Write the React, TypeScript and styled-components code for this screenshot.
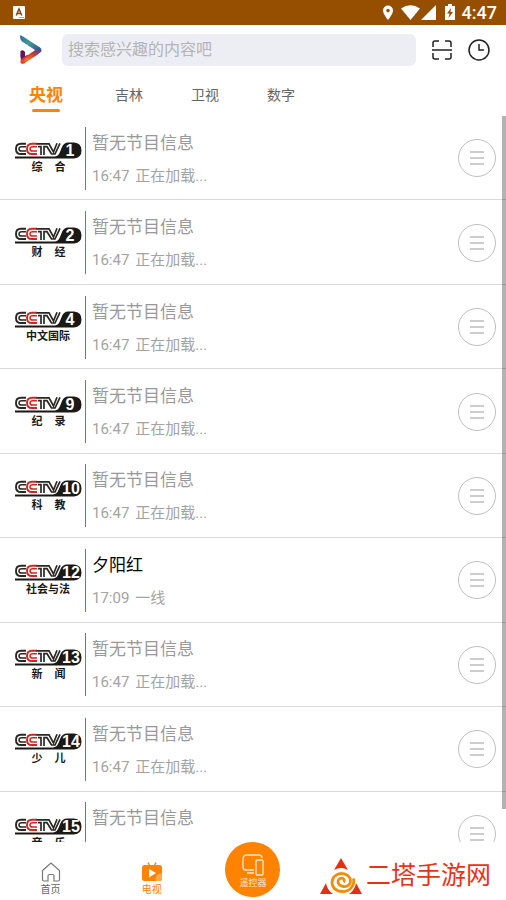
import React from "react";
import styled, { createGlobalStyle } from "styled-components";

const GlobalStyle = createGlobalStyle`
  * { box-sizing: border-box; }
  body {
    margin: 0;
    background: #fff;
    font-family: Roboto, "Noto Sans CJK SC", sans-serif;
  }
  button, input { font: inherit; }
  button { border: 0; padding: 0; background: none; cursor: pointer; }
`;

const Page = styled.div`
  display: flex;
  flex-direction: column;
  height: 100vh;
  overflow: hidden;
`;

const StatusBar = styled.div`
  flex: none;
  display: flex;
  align-items: center;
  height: 25px;
  padding: 0 9px 0 13px;
  background: #964f00;
  color: #fff;
`;

const StatusIcons = styled.div`
  display: flex;
  align-items: center;
  margin-left: auto;
`;

const Clock = styled.time`
  margin-left: 7px;
  font-size: 18px;
  font-weight: 500;
  line-height: 25px;
`;

const Header = styled.header`
  flex: none;
  display: flex;
  align-items: center;
  height: 49px;
  padding: 0 16px 0 18px;
`;

const SearchInput = styled.input`
  flex: 1;
  min-width: 0;
  height: 32px;
  margin: 0 15px 0 18px;
  padding: 0 6px;
  border: 0;
  border-radius: 6px;
  background: #edeef3;
  font-size: 16px;
  outline: none;
  &::placeholder { color: #b4b4b6; opacity: 1; }
`;

const HeaderButton = styled.button`
  display: flex;
  width: 22px;
  height: 22px;
  & + & { margin-left: 15px; }
`;

const Tabs = styled.nav`
  flex: none;
  display: flex;
  align-items: center;
  height: 42px;
  padding-left: 8px;
`;

const Tab = styled.button<{ $active?: boolean }>`
  display: flex;
  flex-direction: column;
  align-items: center;
  width: 76px;
  height: 42px;
  font-size: ${(p) => (p.$active ? 17 : 14)}px;
  font-weight: ${(p) => (p.$active ? 700 : 400)};
  line-height: 42px;
  color: ${(p) => (p.$active ? "#ff8200" : "#666")};
  margin-right: ${(p) => (p.$active ? 7 : 0)}px;
  &::after {
    content: "";
    flex: none;
    width: 28px;
    height: 3px;
    margin-top: -7px;
    border-radius: 2px;
    background: ${(p) => (p.$active ? "#ff8200" : "transparent")};
  }
`;

const ListArea = styled.main`
  flex: 1;
  min-height: 0;
  display: flex;
  align-items: flex-start;
  position: relative;
  overflow: hidden;
`;

const ScrollThumb = styled.div`
  position: absolute;
  top: 0;
  right: 0;
  bottom: 33px;
  width: 4px;
  background: rgba(0, 0, 0, 0.3);
`;

const ChannelList = styled.ul`
  flex: 1;
  display: grid;
  grid-auto-rows: 1fr;
  min-height: 760px;
  margin: 0;
  padding: 0;
  list-style: none;
`;

const Row = styled.li`
  display: flex;
  align-items: center;
  padding: 1px 10px 0 14px;
  border-bottom: 1px solid #d9d9d9;
`;

const Logo = styled.svg`
  flex: none;
  width: 68px;
  height: 34px;
  margin-right: 3px;
`;

const Program = styled.div`
  flex: 1;
  min-width: 0;
  height: 63px;
  padding-left: 6px;
  border-left: 1px solid #d65252;
`;

const Title = styled.div<{ $live?: boolean }>`
  font-size: 17px;
  line-height: 33px;
  color: ${(p) => (p.$live ? "#000" : "#999")};
`;

const Detail = styled.div`
  display: flex;
  gap: 6px;
  font-size: 15px;
  line-height: 33px;
  color: #a3a3a3;
`;

const MenuButton = styled.button`
  flex: none;
  display: flex;
  align-items: center;
  justify-content: center;
  width: 38px;
  height: 38px;
  border: 1px solid #c0c0c0;
  border-radius: 50%;
`;

const BottomBar = styled.nav`
  flex: none;
  display: grid;
  grid-template-columns: repeat(5, 1fr);
  height: 58px;
  background: #fff;
`;

const NavItem = styled.button<{ $active?: boolean }>`
  display: flex;
  flex-direction: column;
  align-items: center;
  justify-content: flex-start;
  padding-top: 20px;
  font-size: 10px;
  line-height: 15px;
  color: ${(p) => (p.$active ? "#ff8200" : "#666")};
`;

const Remote = styled.button`
  justify-self: center;
  display: flex;
  flex-direction: column;
  align-items: center;
  width: 55px;
  height: 55px;
  padding-top: 12px;
  border-radius: 50%;
  background: #ff8200;
  color: #ffe9d0;
  font-size: 9px;
  line-height: 14px;
`;

const Brand = styled.a`
  grid-column: span 2;
  justify-self: end;
  display: flex;
  align-items: center;
  gap: 4px;
  margin-right: 15px;
  padding-top: 9px;
  color: #e83317;
  font-size: 25px;
  line-height: 36px;
  text-decoration: none;
  white-space: nowrap;
`;

type Channel = { no: string; name: string; title?: string; time?: string; detail?: string };

const channels: Channel[] = [
  { no: "1", name: "综合" },
  { no: "2", name: "财经" },
  { no: "4", name: "中文国际" },
  { no: "9", name: "纪录" },
  { no: "10", name: "科教" },
  { no: "12", name: "社会与法", title: "夕阳红", time: "17:09", detail: "一线" },
  { no: "13", name: "新闻" },
  { no: "14", name: "少儿" },
  { no: "15", name: "音乐" },
];

const Caption = styled.text`
  fill: #1b1916;
  font-family: "Noto Sans CJK SC", sans-serif;
  font-size: 11px;
  font-weight: 700;
  text-anchor: middle;
`;

const ChannelNumber = styled.text`
  fill: #fff;
  font-family: "Liberation Sans", sans-serif;
  font-size: 16px;
  font-weight: 700;
  text-anchor: middle;
`;

function LetterC() {
  return (
    <>
      <path d="M12 2.800H7Q2 2.800 2 7.900T7 13H12" strokeWidth="1.900" />
      <path d="M12 5.700H7.800Q5 5.700 5 7.900T7.800 10.100H12" strokeWidth="1.500" />
    </>
  );
}

function ChannelLogo({ no, name }: Channel) {
  const wide = no.length > 1;
  return (
    <Logo viewBox="0 0 68 34" role="img" aria-label={`CCTV-${no} ${name}`}>
      <g fill="none" stroke="#2b2824">
        <LetterC />
      </g>
      <g fill="none" stroke="#cf2622" transform="translate(11 0)">
        <LetterC />
      </g>
      <path
        d="M22.500 2.800H35L39.500 11L43 2.300M24 5.700H27V14M30 14V5.700H33L37.500 13H41L46 2.300"
        fill="none"
        stroke="#2b2824"
        strokeWidth="1.700"
      />
      <path
        d={wide
          ? "M1 15.500H39Q43 15 44.500 11L46.500 6Q48.500 1.500 53 1.500H60Q67.500 2 67.500 9.500T60 17.500H1Z"
          : "M1 15.500H41Q44.500 15 46 11L48 6Q50 1.500 54 1.500H60Q67.500 2 67.500 9.500T60 17.500H1Z"}
        fill="#1b1916"
      />
      <ChannelNumber x={wide ? 57 : 56} y="15">{no}</ChannelNumber>
      {name.length === 2 ? (
        <>
          <Caption x="23" y="30">{name[0]}</Caption>
          <Caption x="46" y="30">{name[1]}</Caption>
        </>
      ) : (
        <Caption x="34" y="30">{name}</Caption>
      )}
    </Logo>
  );
}

function AppLogo() {
  return (
    <svg width="26" height="30" viewBox="0 0 26 30" aria-hidden="true">
      <defs>
        <linearGradient id="top" x1="0" y1="0" x2="1" y2="1">
          <stop offset="0" stopColor="#2c6f9b" />
          <stop offset="0.45" stopColor="#419a91" />
          <stop offset="1" stopColor="#2c3f9b" />
        </linearGradient>
        <linearGradient id="bottom" x1="0" y1="1" x2="1" y2="0">
          <stop offset="0" stopColor="#d81e2c" />
          <stop offset="0.3" stopColor="#f4801f" />
          <stop offset="0.65" stopColor="#c63b35" />
          <stop offset="1" stopColor="#2d4fa8" />
        </linearGradient>
      </defs>
      <path d="M2 .5Q3 0 5 1.500L22 12.500Q25 15 22 17.500L17 15L4 6.500Q2 5 2 .5Z" fill="url(#top)" />
      <path d="M2.500 25L18 14.500L23.500 16Q22 18 19 20L6 28.500Q2 30 2.500 25Z" fill="url(#bottom)" />
      <path d="M2.500 16Q5 14 7 17V21L9 20.500L3 25Q2 21 2.500 16Z" fill="#5b1764" />
      <path d="M3.500 24L9 20L12 20L5 25.500Z" fill="#e02c49" />
    </svg>
  );
}

function BrandMark() {
  return (
    <svg width="42" height="36" viewBox="0 0 42 36" aria-hidden="true">
      <g fill="#e62e12">
        <path d="M21 0L28 12Q21 8 14 12Z" />
        <path d="M6 25Q7 32 13 36H0Z" />
        <path d="M36 25L42 36H29Q35 32 36 25Z" />
      </g>
      <path
        d="M33.500 20.500C35 28 29.500 33.500 22.500 33.500C16 33.500 12 29.500 12 24.500C12 19 16.500 15.500 21.500 15.500C27 15.500 30.500 19 30.500 23C30.500 27 27 29 23.500 28.500C19.500 28 17.500 25.500 18 23C18.500 20.500 21 19.500 23 20.500C24.500 21.500 24.500 23 23.500 24"
        fill="none"
        stroke="#f28c0a"
        strokeWidth="2.800"
      />
    </svg>
  );
}

export default function App() {
  return (
    <Page>
      <GlobalStyle />
      <StatusBar>
        <svg width="12" height="13" viewBox="0 0 12 13" aria-hidden="true">
          <rect width="12" height="13" rx="1" fill="#fff" />
          <path d="M3.200 9.500L6 3L8.800 9.500M4.200 7.500H7.800" fill="none" stroke="#7d4a18" strokeWidth="1.500" />
          <path d="M6.500 11.500H11" stroke="#7d4a18" strokeDasharray="1 1" />
        </svg>
        <StatusIcons>
          <svg width="74" height="17" viewBox="0 0 74 17" fill="#fff" aria-hidden="true">
            <path fillRule="evenodd" d="M7 1.500A5 5 0 0 0 2 6.500C2 10 7 16 7 16S12 10 12 6.500A5 5 0 0 0 7 1.500M7 4.800A1.800 1.800 0 1 1 7 8.400A1.800 1.800 0 1 1 7 4.800" />
            <path d="M20 4.500Q29.500-2 39 4.500L29.500 16Z" />
            <path d="M55 1V16H40Z" />
            <path fillRule="evenodd" d="M64 2H67V0H71V2H74V16H64ZM70 4L66 9.500H68.500L67.500 14L72 8H69.500Z" />
          </svg>
          <Clock>4:47</Clock>
        </StatusIcons>
      </StatusBar>
      <Header>
        <AppLogo />
        <SearchInput type="search" aria-label="搜索" placeholder="搜索感兴趣的内容吧" />
        <HeaderButton aria-label="扫一扫">
          <svg width="22" height="22" viewBox="0 0 22 22" fill="none" stroke="#222" strokeWidth="1.500">
            <path d="M2 8V4Q2 2 4 2H8M14 2H18Q20 2 20 4V8M2 14V18Q2 20 4 20H8M14 20H18Q20 20 20 18V14M1 11H21" />
          </svg>
        </HeaderButton>
        <HeaderButton aria-label="历史记录">
          <svg width="22" height="22" viewBox="0 0 22 22" fill="none" stroke="#222" strokeWidth="1.500">
            <circle cx="11" cy="11" r="10" />
            <path d="M11 5V11H16" />
          </svg>
        </HeaderButton>
      </Header>
      <Tabs>
        <Tab $active>央视</Tab>
        <Tab>吉林</Tab>
        <Tab>卫视</Tab>
        <Tab>数字</Tab>
      </Tabs>
      <ListArea>
        <ChannelList>
          {channels.map((c) => (
            <Row key={c.no}>
              <ChannelLogo {...c} />
              <Program>
                <Title $live={!!c.title}>{c.title ?? "暂无节目信息"}</Title>
                <Detail>
                  <span>{c.time ?? "16:47"}</span>
                  <span>{c.detail ?? "正在加载..."}</span>
                </Detail>
              </Program>
              <MenuButton aria-label="节目单">
                <svg width="16" height="14" viewBox="0 0 16 14" stroke="#bdbdbd" strokeWidth="1.600">
                  <path d="M1 1H15M1 7H15M1 13H15" />
                </svg>
              </MenuButton>
            </Row>
          ))}
        </ChannelList>
        <ScrollThumb />
      </ListArea>
      <BottomBar>
        <NavItem>
          <svg width="20" height="20" viewBox="0 0 20 20" fill="none" stroke="#777" strokeWidth="1.200">
            <path d="M1.500 8.500L10 1L18.500 8.500V17.500Q18.500 19 17 19H13V14Q13 12.500 11.500 12.500H8.500Q7 12.500 7 14V19H3Q1.500 19 1.500 17.500Z" />
          </svg>
          首页
        </NavItem>
        <NavItem $active>
          <svg width="20" height="20" viewBox="0 0 20 20">
            <path d="M6 .5L8 4M14 .5L12 4" stroke="#ff8200" strokeWidth="1.500" />
            <rect y="3" width="20" height="16" rx="2.500" fill="#ff8200" />
            <path d="M20 11A6 6 0 0 0 14 19H17.500Q20 19 20 16.500Z" fill="#ffa84e" />
            <path d="M7 7L14 11L7 15.500Z" fill="#fff" />
          </svg>
          电视
        </NavItem>
        <Remote>
          <svg width="22" height="22" viewBox="0 0 22 22" fill="none" stroke="#ffe9d0" strokeWidth="1.300">
            <path d="M20 4V3Q19 1 17 1H5Q1 1 1 5V13Q1 16 4 16H12M5 19H12" />
            <rect x="14" y="6" width="7" height="15" rx="1" />
          </svg>
          遥控器
        </Remote>
        <Brand href="#">
          <BrandMark />
          二塔手游网
        </Brand>
      </BottomBar>
    </Page>
  );
}
